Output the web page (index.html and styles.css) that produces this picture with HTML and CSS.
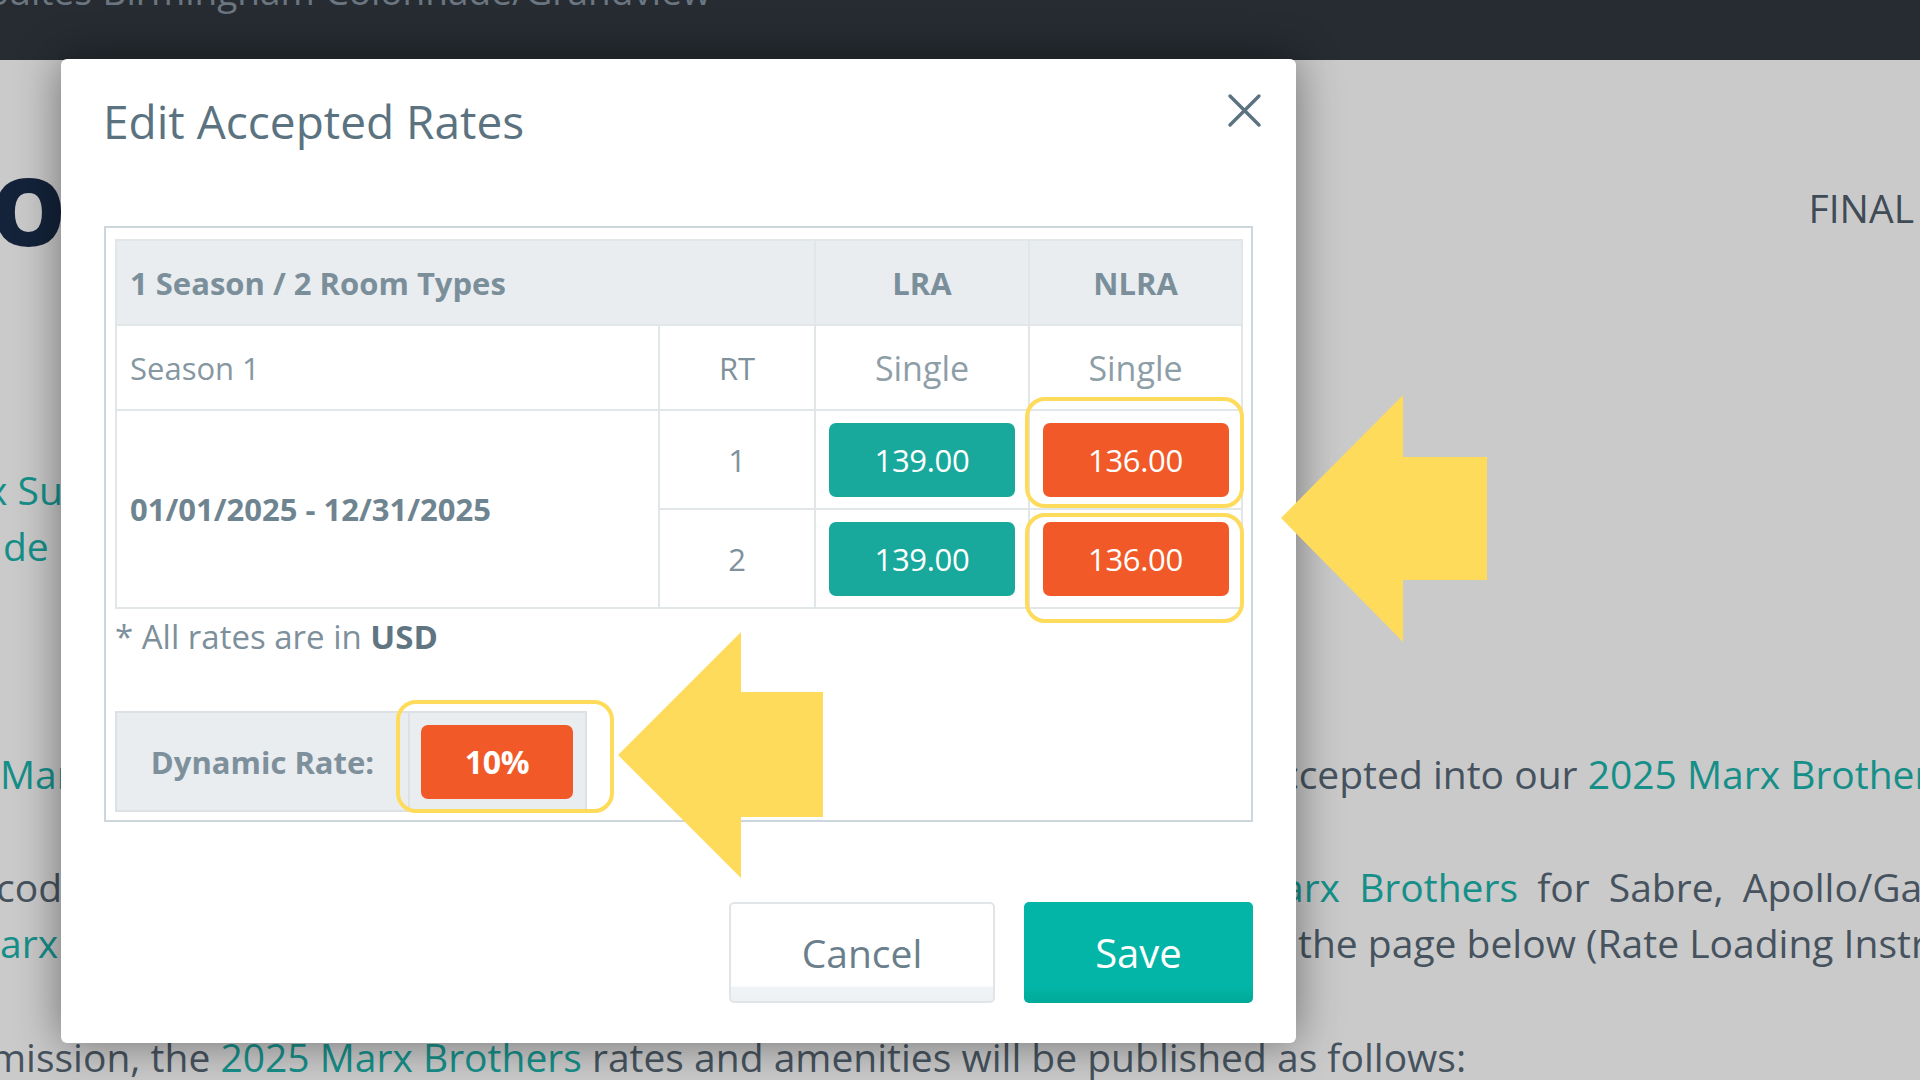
FILE: index.html
```html
<!DOCTYPE html>
<html lang="en">
<head>
<meta charset="utf-8">
<title>Edit Accepted Rates</title>
<link rel="stylesheet" href="styles.css">
</head>
<body>
<div class="topbar"><span class="topbar-title">Suites Birmingham Colonnade/Grandview</span></div>

<main class="page">
  <div class="page-head">
    <span class="logo-o">O</span>
    <span class="status">FINAL</span>
  </div>
  <div class="line r1"><div class="frag-l"><span class="link fl1">x Suites Birmingham</span></div></div>
  <div class="line r2"><div class="frag-l"><span class="link fl2">de</span></div></div>
  <div class="line r3"><div class="frag-l"><span class="link fl3">Marx Brothers</span></div><div class="frag-r"><span class="fr3">ccepted into our <span class="link">2025 Marx Brothers</span> program</span></div></div>
  <div class="line r4"><div class="frag-l"><span class="fl4">code</span></div><div class="frag-r"><span class="fr4"><span class="link">arx Brothers</span> for Sabre, Apollo/Galileo</span></div></div>
  <div class="line r5"><div class="frag-l"><span class="link fl5">Marx Brothers</span></div><div class="frag-r"><span class="fr5">the page below (Rate Loading Instructions)</span></div></div>
  <div class="line r6"><span class="fl6">mission, the <span class="link">2025 Marx Brothers</span> rates and amenities will be published as follows:</span></div>
</main>

<div class="modal">
  <div class="modal-header">
    <h2 class="modal-title">Edit Accepted Rates</h2>
    <button class="close" aria-label="Close">
      <svg width="35" height="35" viewBox="0 0 35 35"><path d="M3 3L32 32M32 3L3 32" fill="none" stroke="#5b7380" stroke-width="3.4" stroke-linecap="round"/></svg>
    </button>
  </div>

  <div class="rates-box">
    <table class="rates">
      <colgroup><col class="c1"><col class="c2"><col class="c3"><col class="c4"></colgroup>
      <thead>
        <tr class="head">
          <th colspan="2" class="th-left">1 Season / 2 Room Types</th>
          <th>LRA</th>
          <th>NLRA</th>
        </tr>
      </thead>
      <tbody>
        <tr class="sub">
          <td class="season">Season 1</td>
          <td class="num">RT</td>
          <td class="single">Single</td>
          <td class="single">Single</td>
        </tr>
        <tr class="rate">
          <td rowspan="2" class="dates">01/01/2025 - 12/31/2025</td>
          <td class="num">1</td>
          <td><span class="rate-btn teal">139.00</span></td>
          <td><span class="rate-btn orange hl hl-a">136.00</span></td>
        </tr>
        <tr class="rate">
          <td class="num">2</td>
          <td><span class="rate-btn teal">139.00</span></td>
          <td><span class="rate-btn orange hl hl-b">136.00</span></td>
        </tr>
      </tbody>
    </table>
    <p class="note">* All rates are in <b>USD</b></p>
    <div class="dyn">
      <div class="dyn-label">Dynamic Rate:</div>
      <div class="dyn-value"><span class="rate-btn orange pct hl hl-c">10%</span></div>
    </div>
  </div>

  <div class="modal-footer">
    <button class="btn cancel">Cancel</button>
    <button class="btn save">Save</button>
  </div>
</div>

<svg class="arrow arrow-top" width="206" height="247" viewBox="0 0 206 247"><polygon points="0,123 122,0 122,62 206,62 206,185 122,185 122,247" fill="#fedb5b"/></svg>
<svg class="arrow arrow-bottom" width="205" height="246" viewBox="0 0 205 246"><polygon points="0,123 123,0 123,60 205,60 205,185 123,185 123,246" fill="#fedb5b"/></svg>
</body>
</html>
```
FILE: styles.css
```css
* { box-sizing: border-box; }
html, body { margin: 0; }
body {
  width: 1920px;
  height: 1080px;
  overflow: hidden;
  position: relative;
  background: #cacaca;
  font-family: "Open Sans", "Noto Sans", sans-serif;
}

/* ---------- background page ---------- */
.topbar { height: 60px; background: #262c32; overflow: hidden; }
.topbar-title {
  display: block;
  white-space: nowrap;
  font-size: 37px;
  line-height: 37px;
  color: #6b7680;
  margin: -28px 0 0 -12px;
  word-spacing: 1px;
}

.page-head {
  display: flex;
  justify-content: space-between;
  align-items: center;
  height: 100px;
  margin-top: 100px;
  padding-right: 6px;
}
.logo-o {
  font-weight: 800;
  font-size: 94px;
  line-height: 100px;
  color: #14233a;
  margin-left: -9px;
}
.status { font-size: 39px; line-height: 39px; color: #3f4b56; margin-bottom: 6px; }

.line {
  display: flex;
  height: 56px;
  line-height: 56px;
  font-size: 39px;
  color: #46535e;
  white-space: nowrap;
}
.r1 { margin-top: 202px; }
.r3 { margin-top: 172px; }
.r4 { margin-top: 57px; }
.r6 { margin-top: 58px; overflow: hidden; }
.frag-l { width: 61px; flex: none; overflow: hidden; }
.frag-r { width: 624px; margin-left: auto; overflow: hidden; }
.frag-l > span, .frag-r > span, .r6 > span { display: inline-block; }
.link { color: #168f89; }
.fl1 { margin-left: -13px; }
.fl2 { margin-left: 3px; }
.fl3 { margin-left: 0; }
.fl4 { margin-left: -4px; }
.fl5 { margin-left: -35px; }
.fl6 { margin-left: -10px; }
.fr3 { margin-left: -16px; }
.fr4 { margin-left: -14px; word-spacing: 9px; }
.fr5 { margin-left: 2px; }

/* ---------- modal ---------- */
.modal {
  position: absolute;
  left: 61px;
  top: 59px;
  width: 1235px;
  height: 984px;
  background: #fff;
  border-radius: 6px;
  box-shadow: 0 0 45px rgba(0, 0, 0, 0.45);
  padding: 32px 43px 40px 43px;
  display: flex;
  flex-direction: column;
  z-index: 2;
}
.modal-header {
  display: flex;
  justify-content: space-between;
  align-items: flex-start;
  margin-right: -9px;
  height: 61px;
}
.modal-title {
  margin: 0 0 0 -1px;
  font-size: 46px;
  line-height: 61px;
  font-weight: 400;
  color: #5b7380;
}
.close {
  margin-top: 2px;
  padding: 0;
  border: 0;
  background: none;
  width: 35px;
  height: 35px;
  display: block;
}
.close svg { display: block; }

.rates-box {
  margin-top: 74px;
  border: 2px solid #cdd6db;
  padding: 11px 9px 8px 9px;
}
.rates {
  width: 100%;
  border-collapse: collapse;
  table-layout: fixed;
  color: #8597a1;
  font-size: 31px;
}
.c1 { width: 543px; }
.c2 { width: 156px; }
.c3 { width: 214px; }
.c4 { width: 213px; }
.rates th, .rates td {
  border: 2px solid #e1e6e9;
  padding: 0;
  text-align: center;
  vertical-align: middle;
}
.rates th {
  background: #e9edf0;
  color: #7b8f9b;
  font-weight: 700;
  height: 85px;
}
.rates .th-left { text-align: left; padding-left: 13px; }
.sub td { height: 85px; }
.rates .season { text-align: left; padding-left: 13px; }
.single { font-size: 34px; color: #8e9ea7; }
.rate td { height: 99px; }
.rates .dates { text-align: left; padding-left: 13px; font-weight: 700; color: #6e8490; }
.num { color: #7f929c; }

.rate-btn {
  position: relative;
  display: block;
  width: 186px;
  height: 74px;
  margin: 0 auto;
  border-radius: 7px;
  color: #fff;
  font-size: 31px;
  line-height: 74px;
  text-align: center;
  letter-spacing: -0.3px;
}
.teal { background: #18a99c; }
.orange { background: #f15a28; }
.hl::after {
  content: "";
  position: absolute;
  border: 4px solid #fedb5b;
  border-radius: 20px;
}
.hl-a::after { left: -18px; right: -15px; top: -26px; bottom: -11px; }
.hl-b::after { left: -18px; right: -15px; top: -9px; bottom: -27px; }
.hl-c::after { left: -25px; right: -41px; top: -25px; bottom: -14px; }

.note {
  margin: 6px 0 0;
  font-size: 33px;
  line-height: 44px;
  color: #7d909b;
}
.note b { color: #5f7682; }

.dyn {
  margin-top: 52px;
  display: flex;
  width: 472px;
  height: 101px;
  background: #e9edf0;
  border: 2px solid #dbe1e5;
}
.dyn-label {
  width: 293px;
  flex: none;
  border-right: 2px solid #dbe1e5;
  display: flex;
  align-items: center;
  justify-content: center;
  font-size: 31px;
  font-weight: 700;
  color: #7d909b;
}
.dyn-value { flex: 1; padding: 12px 0 0 11px; }
.pct { width: 152px; margin: 0; font-weight: 700; font-size: 32px; }

.modal-footer {
  margin-top: auto;
  display: flex;
  justify-content: flex-end;
  gap: 29px;
}
.btn {
  height: 101px;
  font-family: inherit;
  border-radius: 5px;
  padding: 0;
  cursor: pointer;
}
.cancel {
  width: 266px;
  font-size: 39px;
  color: #6a7f8b;
  border: 2px solid #e1e5e8;
  background: linear-gradient(#ffffff 0, #ffffff 84%, #f1f4f6 86%, #eef1f3 100%);
}
.save {
  width: 229px;
  font-size: 40px;
  color: #fff;
  border: 0;
  background: linear-gradient(#03b5a6 0, #03b5a6 84%, #01a999 100%);
}

/* ---------- annotation arrows ---------- */
.arrow { position: absolute; z-index: 3; display: block; }
.arrow-top { left: 1281px; top: 395px; }
.arrow-bottom { left: 618px; top: 632px; }
```
